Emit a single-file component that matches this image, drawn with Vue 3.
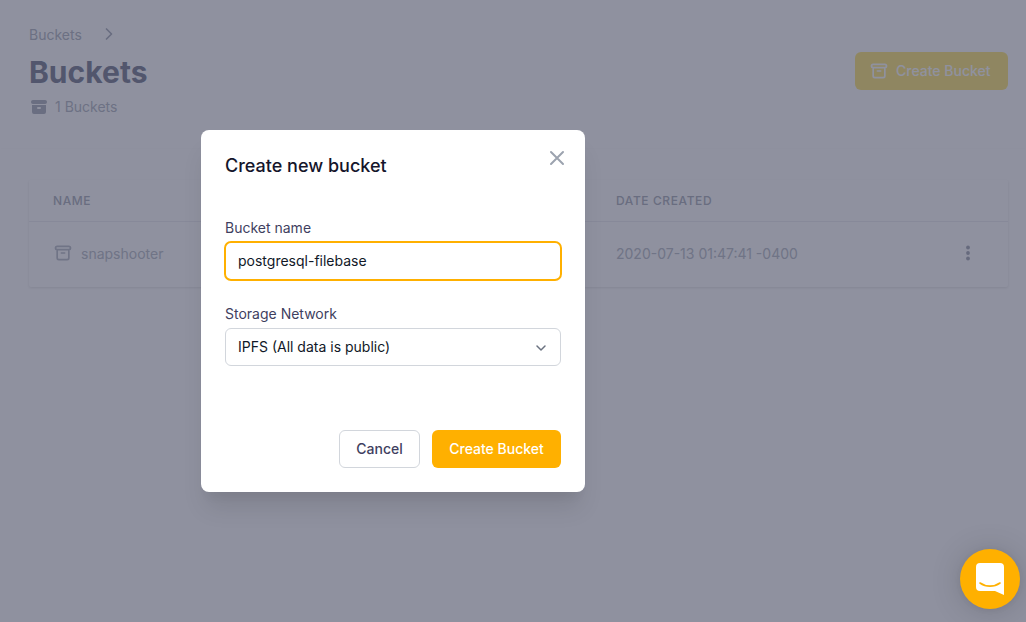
<script setup>
const kolom = ["NAME", "DATE CREATED"];
const bucket = { nama: "snapshooter", tanggal: "2020-07-13 01:47:41 -0400" };
</script>

<template>
  <div class="halaman">
    <header class="kepala">
      <div>
        <nav class="remah">
          <span>Buckets</span>
          <svg width="20" height="20" viewBox="0 0 20 20" fill="none" stroke="currentColor" stroke-width="1.7">
            <path d="M7.5 5l5 5-5 5" stroke-linecap="round" stroke-linejoin="round" />
          </svg>
        </nav>
        <h1>Buckets</h1>
        <div class="jumlah">
          <svg width="20" height="20" viewBox="0 0 20 20" fill="currentColor">
            <path d="M4 3a2 2 0 100 4h12a2 2 0 100-4H4z" />
            <path fill-rule="evenodd" d="M3 8h14v7a2 2 0 01-2 2H5a2 2 0 01-2-2V8zm5 3a1 1 0 011-1h2a1 1 0 110 2H9a1 1 0 01-1-1z" clip-rule="evenodd" />
          </svg>
          <span>1 Buckets</span>
        </div>
      </div>
      <button class="tombol-latar">
        <svg width="20" height="20" viewBox="0 0 24 24" fill="none" stroke="currentColor" stroke-width="2">
          <path d="M5 8h14M5 8a2 2 0 110-4h14a2 2 0 110 4M5 8v10a2 2 0 002 2h10a2 2 0 002-2V8m-9 4h4" stroke-linecap="round" stroke-linejoin="round" />
        </svg>
        Create Bucket
      </button>
    </header>

    <section class="tabel">
      <div class="baris baris-judul">
        <span v-for="k in kolom" :key="k">{{ k }}</span>
        <span></span>
      </div>
      <div class="baris baris-isi">
        <span class="nama">
          <svg width="20" height="20" viewBox="0 0 24 24" fill="none" stroke="currentColor" stroke-width="2">
            <path d="M5 8h14M5 8a2 2 0 110-4h14a2 2 0 110 4M5 8v10a2 2 0 002 2h10a2 2 0 002-2V8m-9 4h4" stroke-linecap="round" stroke-linejoin="round" />
          </svg>
          {{ bucket.nama }}
        </span>
        <span>{{ bucket.tanggal }}</span>
        <svg class="titik" width="20" height="20" viewBox="0 0 20 20" fill="currentColor">
          <circle cx="10" cy="4.5" r="1.9" />
          <circle cx="10" cy="10" r="1.9" />
          <circle cx="10" cy="15.5" r="1.9" />
        </svg>
      </div>
    </section>

    <div class="selubung">
      <div class="modal">
        <div class="modal-kepala">
          <h2>Create new bucket</h2>
          <button class="tutup" aria-label="Close">
            <svg width="24" height="24" viewBox="0 0 24 24" fill="none" stroke="currentColor" stroke-width="2">
              <path d="M6 18L18 6M6 6l12 12" stroke-linecap="round" stroke-linejoin="round" />
            </svg>
          </button>
        </div>

        <label class="label">Bucket name</label>
        <div class="isian fokus">postgresql-filebase</div>

        <label class="label label-dua">Storage Network</label>
        <div class="isian pilihan">
          <span>IPFS (All data is public)</span>
          <svg width="20" height="20" viewBox="0 0 20 20" fill="none" stroke="#6b7280" stroke-width="1.5">
            <path d="M6 8l4 4 4-4" stroke-linecap="round" stroke-linejoin="round" />
          </svg>
        </div>

        <div class="aksi">
          <button class="batal">Cancel</button>
          <button class="buat">Create Bucket</button>
        </div>
      </div>
    </div>

    <button class="obrolan" aria-label="Chat">
      <svg width="28" height="32" viewBox="0 0 28 32">
        <path d="M4 0h20a4 4 0 014 4v28l-9-4H4a4 4 0 01-4-4V4a4 4 0 014-4z" fill="#fff" />
        <path d="M4 20c6 4.2 14 4.2 20 0" fill="none" stroke="#ffb000" stroke-width="1.6" stroke-linecap="round" />
      </svg>
    </button>
  </div>
</template>

<style>
html,
body {
  margin: 0;
  background: #fff;
}
</style>

<style scoped>
.halaman {
  position: relative;
  width: 1026px;
  height: 622px;
  overflow: hidden;
  background: #fff;
  font-family: Inter, "Liberation Sans", sans-serif;
  font-size: 14px;
  color: #1f1f3d;
}
button {
  font-family: inherit;
}
.kepala {
  height: 148px;
  box-sizing: border-box;
  padding: 24px 18px 0 29px;
  display: flex;
  justify-content: space-between;
  align-items: flex-start;
  box-shadow: 0 1px 2px rgba(0, 0, 0, 0.015);
}
.remah {
  display: flex;
  align-items: center;
  gap: 17px;
  height: 20px;
  color: #b8bcc6;
}
.remah svg {
  color: #b2b6c0;
}
h1 {
  margin: 10px 0 0;
  font-size: 30px;
  line-height: 36px;
  font-weight: 700;
  letter-spacing: 0.02px;
  color: #84889a;
}
.jumlah {
  margin-top: 7px;
  display: flex;
  align-items: center;
  gap: 6px;
  line-height: 20px;
  color: #babec8;
}
.jumlah svg {
  color: #b4b8c2;
}
.tombol-latar {
  margin-top: 28px;
  width: 153px;
  height: 38px;
  padding: 0 0 2px 14px;
  border: 0;
  border-radius: 6px;
  background: #ffe983;
  color: #fff;
  font-size: 14px;
  font-weight: 500;
  display: flex;
  align-items: center;
  justify-content: flex-start;
  gap: 7px;
}
.tombol-latar svg {
  margin-top: 2px;
}
.tabel {
  margin: 32px 18px 0 29px;
  border-radius: 2px;
  box-shadow: 0 1px 3px rgba(0, 0, 0, 0.1);
}
.baris {
  display: grid;
  grid-template-columns: 563px 1fr 40px;
  align-items: center;
  padding: 0 20px 0 24px;
}
.baris-judul {
  height: 41px;
  font-size: 12px;
  font-weight: 500;
  letter-spacing: 0.6px;
  color: #b2b6c0;
  border-bottom: 1px solid #eeeff3;
}
.baris-isi {
  height: 65px;
  padding-bottom: 3px;
  box-sizing: border-box;
  color: #c0c4cc;
}
.nama {
  display: flex;
  align-items: center;
  gap: 8px;
}
.nama svg {
  color: #c0c4cc;
}
.titik {
  justify-self: center;
  color: #acb0bb;
}
.selubung {
  position: absolute;
  inset: 0;
  background: rgba(31, 35, 64, 0.5);
}
.modal {
  position: absolute;
  left: 201px;
  top: 130px;
  width: 384px;
  height: 362px;
  box-sizing: border-box;
  padding: 24px;
  background: #fff;
  border-radius: 8px;
  box-shadow: 0 20px 25px -5px rgba(0, 0, 0, 0.1), 0 10px 10px -5px rgba(0, 0, 0, 0.04);
  display: flex;
  flex-direction: column;
}
.modal-kepala {
  height: 23px;
  margin-bottom: 41px;
}
h2 {
  margin: 0;
  font-size: 18px;
  line-height: 23px;
  font-weight: 500;
  color: #15152b;
}
.tutup {
  position: absolute;
  top: 16px;
  right: 16px;
  padding: 0;
  border: 0;
  background: none;
  color: #9ca3af;
  line-height: 0;
}
.label {
  line-height: 20px;
  color: #3f3f5f;
  margin-bottom: 4px;
}
.label-dua {
  margin-top: 24px;
}
.isian {
  height: 38px;
  box-sizing: border-box;
  padding: 0 12px 2px;
  display: flex;
  align-items: center;
  border: 1px solid #d2d6dc;
  border-radius: 6px;
  color: #111827;
}
.fokus {
  height: 40px;
  margin: -1px;
  padding: 0 12px 2px;
  border: 2px solid #ffb000;
  border-radius: 7px;
}
.pilihan {
  justify-content: space-between;
  padding-right: 9px;
}
.pilihan svg {
  margin-top: 3px;
}
.aksi {
  margin-top: auto;
  display: flex;
  justify-content: flex-end;
  gap: 12px;
}
.aksi button {
  height: 38px;
  padding: 0 0 2px;
  border-radius: 6px;
  font-size: 14px;
  font-weight: 500;
}
.batal {
  width: 81px;
  background: #fff;
  border: 1px solid #d2d6dc;
  color: #3f3f5f;
}
.buat {
  width: 129px;
  background: #ffb000;
  border: 0;
  color: #fff;
}
.obrolan {
  position: absolute;
  left: 960px;
  top: 549px;
  width: 60px;
  height: 60px;
  padding: 0;
  border: 0;
  border-radius: 50%;
  background: #ffb000;
  box-shadow: 0 1px 6px rgba(0, 0, 0, 0.06), 0 2px 32px rgba(0, 0, 0, 0.16);
  display: flex;
  align-items: center;
  justify-content: center;
}
</style>
